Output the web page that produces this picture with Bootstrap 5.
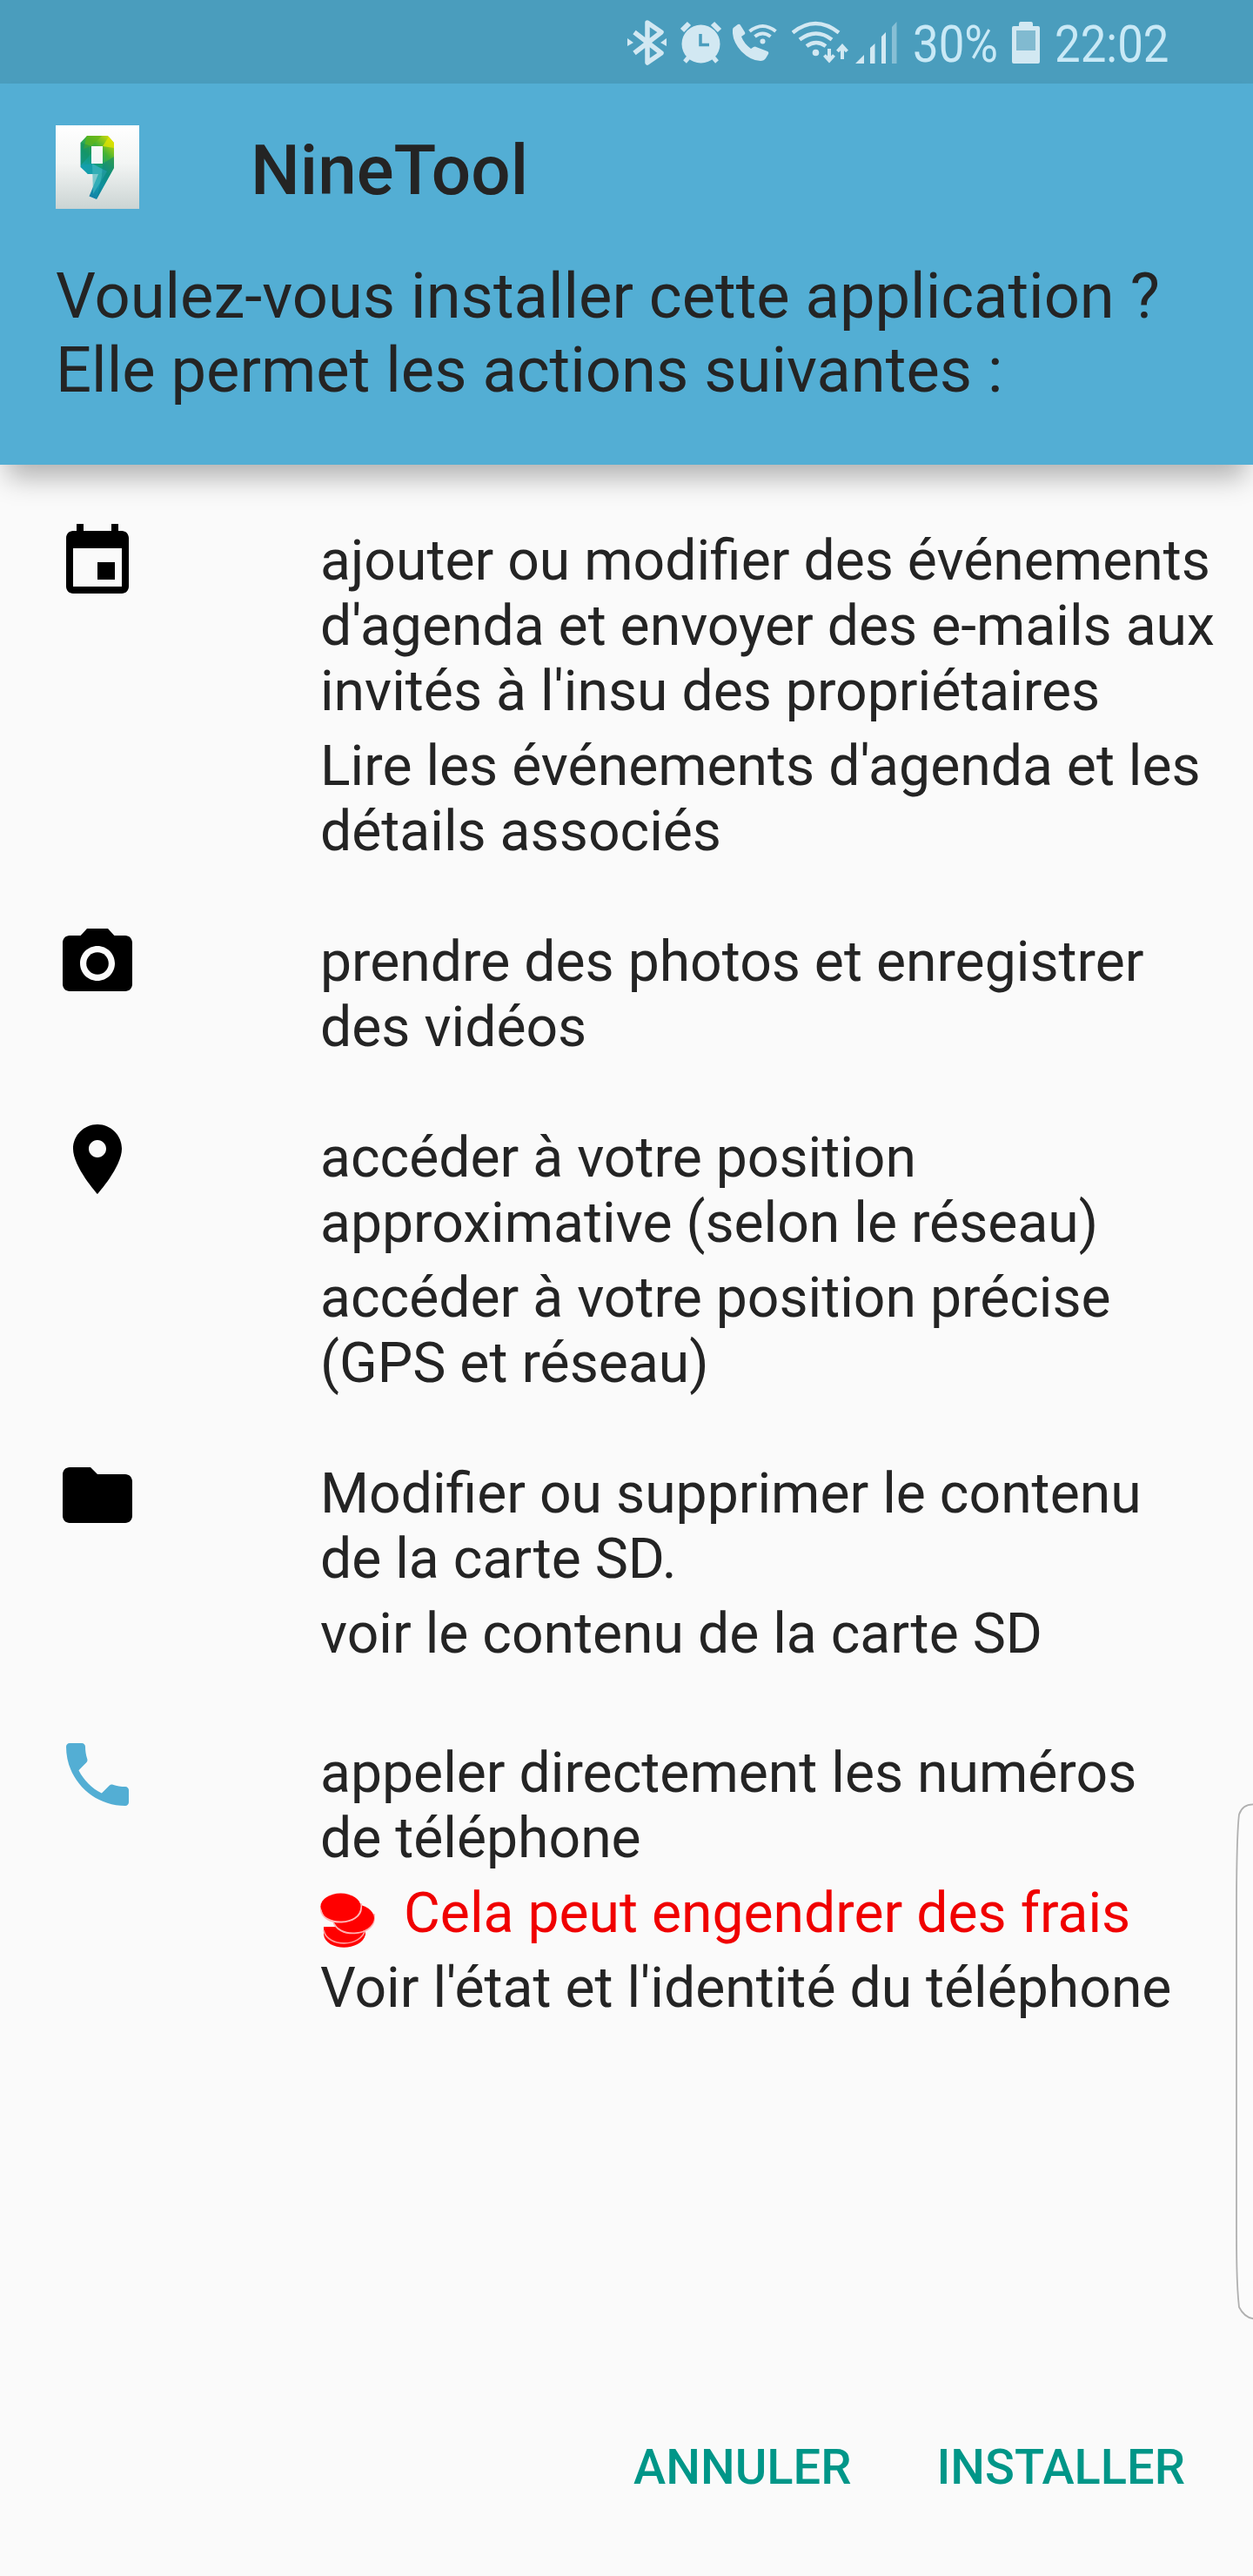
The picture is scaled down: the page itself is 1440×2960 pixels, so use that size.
<!DOCTYPE html>
<html lang="fr">
<head>
<meta charset="utf-8">
<meta name="viewport" content="width=device-width, initial-scale=1">
<title>NineTool</title>
<link href="https://cdn.jsdelivr.net/npm/bootstrap@5.3.0/dist/css/bootstrap.min.css" rel="stylesheet">
<style>
body{font-family:Roboto,"Liberation Sans",sans-serif;color:#242424;background:#fafafa;font-size:64.25px;line-height:75px;height:2960px;overflow:hidden}
svg{display:block;flex:none}
.status-bar{height:96px;background:#4a9dbd;padding-left:721px;color:#c9e9f6;font-size:60px;line-height:70px}
.status-bar svg{fill:#d2e8f2}
.squeeze{display:block;white-space:nowrap;transform-origin:0 50%;transform:scaleX(.88);padding-top:8px}
.pct{width:101px;margin-left:16px}
.clock{width:140px;margin-left:17px}
.ic-alarm{margin-left:16px}
.ic-call{margin-left:12px}
.ic-wifi{margin-left:16px}
.ic-signal{margin-left:7px}
.ic-battery{margin-left:13px}
.install-head{height:438px;background:#53aed4;padding:48px 64px 0;box-shadow:0 22px 30px -8px rgba(0,0,0,.3)}
.app-name{font-size:80px;line-height:94px;font-weight:500;margin-left:128px;padding-top:5px}
.question{font-size:72.3px;line-height:85px;margin-top:55px;white-space:nowrap}
.perms{padding:64px 0 0 64px}
.perm{padding-bottom:56px}
.perm-text{margin-left:208px;padding-top:9px}
.perm-text p{margin-bottom:11px;white-space:nowrap}
.perm:not(.perm-extra) .perm-text{margin-bottom:-1px}
.perm-extra{padding-bottom:65px}
.fee{color:#f00000;gap:32px}
.actions{padding:0 78px 0 0;gap:98px;margin-bottom:92px}
.flat{font-family:inherit;font-size:56px;line-height:66px;font-weight:500;color:#009688;padding:0;border:0;border-radius:0}
.edge-handle{right:0;top:2070px}
</style>
</head>
<body class="d-flex flex-column position-relative">
<header>
<div class="status-bar d-flex">
<svg width="45" height="96" viewBox="721 0 45 96"><path d="M729 37l31 24-16 11V26l16 11-31 24" fill="none" stroke="#d2e8f2" stroke-width="5.5" stroke-linejoin="round"/><path d="M721 44l7 5-7 4zM766 44l-7 5 7 4z"/></svg>
<svg class="ic-alarm" width="48" height="96" viewBox="781 0 48 96"><circle cx="804.5" cy="50.500" r="22"/><path d="M783 35l8-8M826 35l-8-8" stroke="#d2e8f2" stroke-width="6"/><path d="M786 71l6-7M823 71l-6-7" stroke="#d2e8f2" stroke-width="5"/><path d="M804 39v12.500h10" fill="none" stroke="#4a9dbd" stroke-width="3.500"/></svg>
<svg class="ic-call" width="52" height="96" viewBox="841 0 52 96"><path d="M841 34q0-2 2-3l4-3q2-1 3 1l5 8q1 2-1 3l-3 2q3 8 11 14l3-2q2-1 3 0l13 5q2 1 1 3l-3 5q-2 3-6 3-11 0-22-11-11-12-10-25z"/><g fill="none" stroke="#d2e8f2" stroke-width="4"><path d="M860.500 36q15-12 30 0M866.500 42q9-7 18 0"/></g><circle cx="875.500" cy="47.500" r="3"/></svg>
<svg class="ic-wifi" width="66" height="96" viewBox="909 0 66 96"><g fill="none" stroke="#d2e8f2" stroke-width="4.500"><path d="M910 37.500q26-21 53 0M918 45.500q19-14 37 0M926 53q11-8 22 0"/></g><circle cx="936.500" cy="60.500" r="3.800"/><g fill="none" stroke="#d2e8f2" stroke-width="4"><path d="M952 56v13M946.500 63.500l5.500 6 5.500-6M967 68V54M961.500 59l5.500-6 5.500 6"/></g></svg>
<svg class="ic-signal" width="50" height="96" viewBox="982 0 50 96"><path d="M982 73l10-10v10zM999 73V55l5.500-5v23zM1012 73V42l5-5v36z"/><path d="M1024 73V31l5.500-6v48z" opacity=".45"/></svg>
<div class="pct pt-2"><span class="squeeze">30%</span></div>
<svg class="ic-battery" width="32" height="96" viewBox="1162 0 32 96"><path d="M1172 25h12q2 0 2 3v2h6q2 0 2 2v39q0 2-2 2h-28q-2 0-2-2V32q0-2 2-2h6v-2q0-3 2-3z"/><path d="M1167 35h22v23h-22z" fill="#81bad0"/></svg>
<div class="clock pt-2"><span class="squeeze">22:02</span></div>
</div>
<div class="install-head">
<div class="d-flex">
<svg width="96" height="96" viewBox="64 144 96 96"><defs><linearGradient id="tile" x2="0" y2="1"><stop stop-color="#fff"/><stop offset=".45" stop-color="#f3f5f4"/><stop offset="1" stop-color="#cbd4d3"/></linearGradient><linearGradient id="nine" x1=".8" y1="0" x2=".3" y2="1"><stop stop-color="#c4d70a"/><stop offset=".25" stop-color="#45b233"/><stop offset=".48" stop-color="#119c7c"/><stop offset=".7" stop-color="#149eaf"/><stop offset="1" stop-color="#127ca4"/></linearGradient></defs><path fill="url(#tile)" d="M64 144h96v96H64z"/><path fill="url(#nine)" fill-rule="evenodd" d="M100 156h24l7 8v29l-20 36-8.500-3.500L113 200h-12l-8.500-8v-28zm5 12v20h13v-20z"/><path fill="#e3e400" opacity=".75" d="M125 157l6 7v6l-13-2z"/><path fill="#63b518" opacity=".7" d="M100 156h17l-12 12-9 3z"/><path fill="#158e58" opacity=".5" d="M93 164l12 4v8l-12 14z"/><path fill="#159fac" opacity=".8" d="M93 190l12-2 18 9-10 3h-12z"/><path fill="#42b7bd" opacity=".65" d="M106 188l17 9-16 26z"/><path fill="#087d87" opacity=".45" d="M118 188l13-8v13l-20 36 6-27z"/></svg>
<div class="app-name">NineTool</div>
</div>
<p class="question mb-0">Voulez-vous installer cette application ?<br>Elle permet les actions suivantes :</p>
</div>
</header>
<main class="perms flex-grow-1">
<section class="perm d-flex">
<svg width="96" height="96" viewBox="0 0 24 24"><path d="M17 12h-5v5h5v-5zM16 1v2H8V1H6v2H5c-1.110 0-1.990.9-1.990 2L3 19c0 1.100.89 2 2 2h14c1.100 0 2-.9 2-2V5c0-1.100-.9-2-2-2h-1V1h-2zm3 18H5V8h14v11z"/></svg>
<div class="perm-text"><p>ajouter ou modifier des événements<br>d'agenda et envoyer des e-mails aux<br>invités à l'insu des propriétaires</p><p>Lire les événements d'agenda et les<br>détails associés</p></div>
</section>
<section class="perm d-flex">
<svg width="96" height="96" viewBox="0 0 24 24"><circle cx="12" cy="12" r="3.200"/><path d="M9 2L7.170 4H4c-1.100 0-2 .9-2 2v12c0 1.100.9 2 2 2h16c1.100 0 2-.9 2-2V6c0-1.100-.9-2-2-2h-3.170L15 2H9zm3 15c-2.760 0-5-2.240-5-5s2.240-5 5-5 5 2.240 5 5-2.240 5-5 5z"/></svg>
<div class="perm-text"><p>prendre des photos et enregistrer<br>des vidéos</p></div>
</section>
<section class="perm d-flex">
<svg width="96" height="96" viewBox="0 0 24 24"><path d="M12 2C8.130 2 5 5.130 5 9c0 5.250 7 13 7 13s7-7.750 7-13c0-3.870-3.130-7-7-7zm0 9.500c-1.380 0-2.500-1.120-2.500-2.500s1.120-2.500 2.500-2.500 2.500 1.120 2.500 2.500-1.120 2.500-2.500 2.500z"/></svg>
<div class="perm-text"><p>accéder à votre position<br>approximative (selon le réseau)</p><p>accéder à votre position précise<br>(GPS et réseau)</p></div>
</section>
<section class="perm perm-extra d-flex">
<svg width="96" height="96" viewBox="0 0 24 24"><path d="M10 4H4c-1.100 0-1.990.9-1.990 2L2 18c0 1.100.9 2 2 2h16c1.100 0 2-.9 2-2V8c0-1.100-.9-2-2-2h-8l-2-2z"/></svg>
<div class="perm-text"><p>Modifier ou supprimer le contenu<br>de la carte SD.</p><p>voir le contenu de la carte SD</p></div>
</section>
<section class="perm d-flex">
<svg width="96" height="96" viewBox="0 0 24 24" fill="#53aed4"><path d="M6.620 10.790c1.440 2.830 3.760 5.140 6.590 6.590l2.200-2.200c.27-.27.67-.36 1.020-.24 1.120.37 2.330.57 3.570.57.55 0 1 .45 1 1V20c0 .55-.45 1-1 1-9.390 0-17-7.610-17-17 0-.55.45-1 1-1h3.500c.55 0 1 .45 1 1 0 1.250.2 2.450.57 3.570.11.35.03.74-.25 1.020l-2.200 2.200z"/></svg>
<div class="perm-text"><p>appeler directement les numéros<br>de téléphone</p>
<p class="fee d-flex"><svg width="64" height="75" viewBox="368 2160 64 75" overflow="visible"><g fill="#f00"><path d="M372 2213v9c2 19 43 20 48 0v-9z"/><path d="M372 2217c4 20 43 20 48-1" fill="none" stroke="#ff9a9a" stroke-width="1.600"/><path d="M383 2201v5c4 21 46 18 47-2v-5z" stroke="#ffb0b0" stroke-width="1.800"/><ellipse cx="406.500" cy="2203" rx="23.500" ry="16"/><path d="M369 2190v4c2 19 46 18 46-3v-4z" stroke="#ffb8b8" stroke-width="2"/><ellipse cx="391.500" cy="2189.500" rx="23" ry="15"/></g></svg><span>Cela peut engendrer des frais</span></p>
<p>Voir l'état et l'identité du téléphone</p></div>
</section>
</main>
<footer class="actions d-flex justify-content-end">
<button class="btn flat" type="button">ANNULER</button>
<button class="btn flat" type="button">INSTALLER</button>
</footer>
<svg class="edge-handle position-absolute" width="21" height="600" viewBox="1419 2070 21 600"><path d="M1442 2073.500C1434 2073 1427 2076 1424 2085C1421 2110 1421 2150 1421 2200V2540C1421 2590 1421 2625 1424 2651C1428 2659 1434 2664 1442 2664.500" fill="#fbfbfb" stroke="#b0b0b0" stroke-width="1.800"/></svg>
<script src="https://cdn.jsdelivr.net/npm/bootstrap@5.3.0/dist/js/bootstrap.bundle.min.js"></script>
</body>
</html>
